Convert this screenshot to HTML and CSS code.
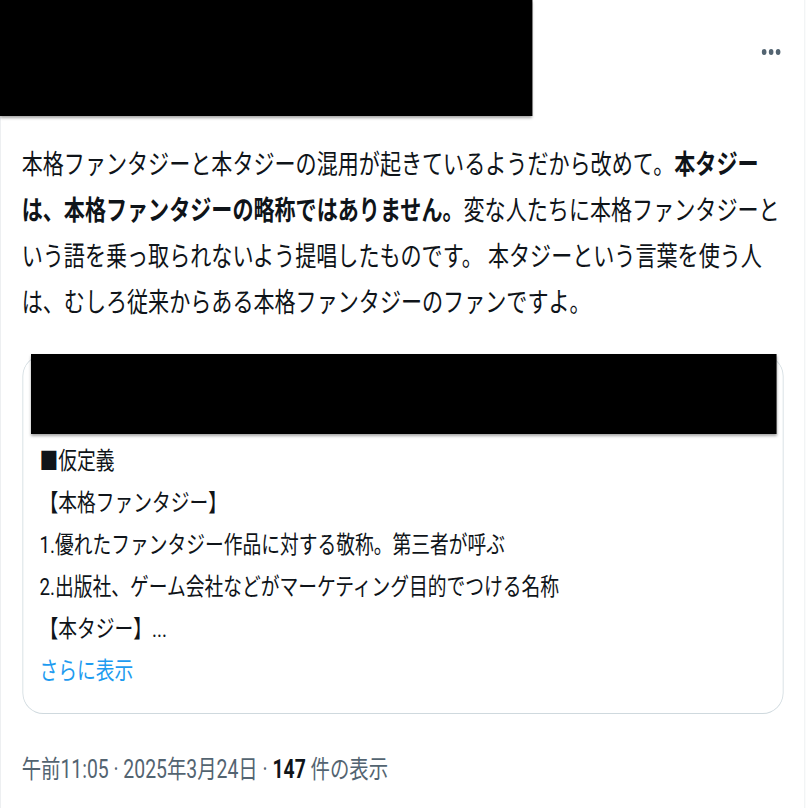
FILE: index.html
```html
<!DOCTYPE html>
<html lang="ja">
<head>
<meta charset="utf-8">
<title>Post</title>
<link rel="stylesheet" href="styles.css">
</head>
<body>
<div class="page">
  <div class="top">
    <div class="redact-top"></div>
    <div class="more">
      <svg width="26" height="8" viewBox="0 0 26 8"><circle cx="4" cy="4" r="3"/><circle cx="13" cy="4" r="3"/><circle cx="22" cy="4" r="3"/></svg>
    </div>
  </div>
  <div class="text">本格ファンタジーと本タジーの混用が起きているようだから改めて。<b>本タジーは、本格ファンタジーの略称ではありません。</b>変な人たちに本格ファンタジーという語を乗っ取られないよう提唱したものです。 本タジーという言葉を使う人は、むしろ従来からある本格ファンタジーのファンですよ。</div>
  <div class="card">
    <div class="card-redact"></div>
    <div class="card-body">
      <div>■仮定義</div>
      <div>【本格ファンタジー】</div>
      <div>1.優れたファンタジー作品に対する敬称。第三者が呼ぶ</div>
      <div>2.出版社、ゲーム会社などがマーケティング目的でつける名称</div>
      <div>【本タジー】...</div>
      <div class="link">さらに表示</div>
    </div>
  </div>
  <div class="meta">午前11:05 · 2025年3月24日 · <b>147</b> 件の表示</div>
</div>
</body>
</html>
```
FILE: styles.css
```css
html, body {
  margin: 0;
  padding: 0;
  background: #ffffff;
  overflow: hidden;
}
.page {
  width: 1039px;
  min-height: 808px;
  box-sizing: border-box;
  border-left: 1px solid #e8ebed;
  border-right: 1px solid #e8ebed;
  transform: scaleX(0.775);
  transform-origin: 0 0;
  font-family: Roboto, "Noto Sans CJK JP", sans-serif;
  color: #0f1419;
}
.top {
  display: flex;
  justify-content: space-between;
  align-items: flex-start;
  height: 116px;
}
.redact-top {
  width: 687px;
  height: 116px;
  margin-left: -1px;
  background: #000;
  box-shadow: 0 2px 3px rgba(0, 0, 0, 0.35);
}
.more {
  margin: 48px 30px 0 0;
  line-height: 0;
}
.more svg {
  fill: #536471;
}
.text {
  width: 985px;
  margin: 26px 0 0 27px;
  font-size: 27.2px;
  line-height: 46px;
}
.text b {
  font-weight: 700;
}
.card {
  width: 982px;
  margin: 29px 0 0 28px;
  box-sizing: border-box;
  border: 1px solid #cfd9de;
  border-radius: 27px / 21px;
}
.card-redact {
  height: 80px;
  margin: -2px 8px 0 10px;
  background: #000;
  box-shadow: 0 2px 3px rgba(0, 0, 0, 0.35);
}
.card-body {
  padding: 6px 0 21px 21px;
  font-size: 24.2px;
  line-height: 42px;
}
.link {
  color: #1d9bf0;
}
.meta {
  margin: 41px 0 0 27px;
  font-size: 25px;
  line-height: 30px;
  color: #536471;
}
.meta b {
  color: #0f1419;
  font-weight: 700;
}
```
